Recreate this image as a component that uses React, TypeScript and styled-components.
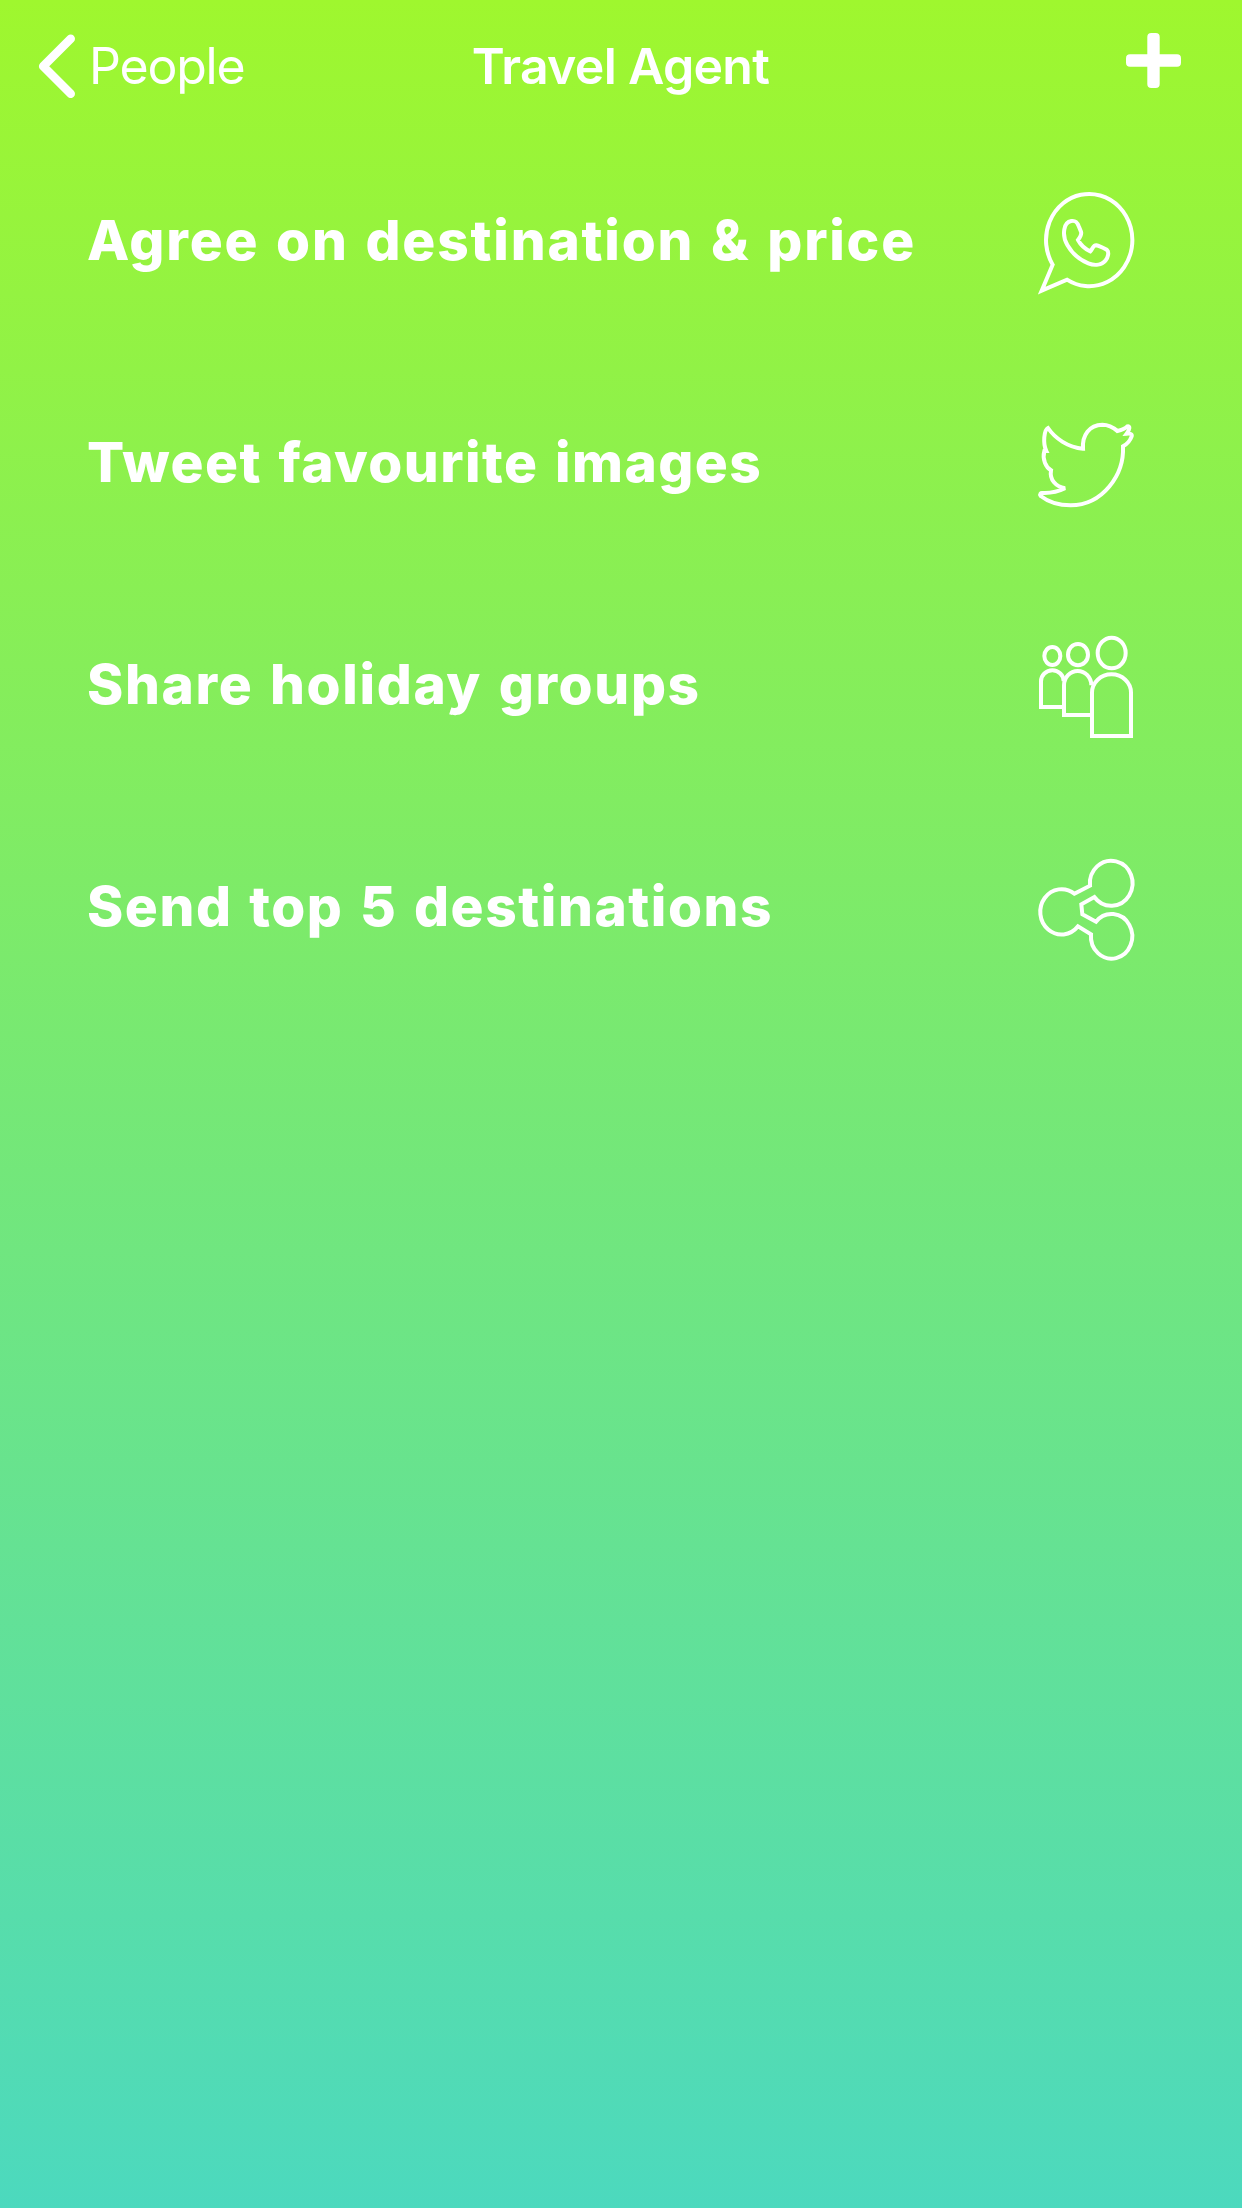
import React from "react";
import styled, { createGlobalStyle } from "styled-components";

const GlobalStyle = createGlobalStyle`
  * { box-sizing: border-box; }
  body { margin: 0; }
`;

const Screen = styled.main`
  min-height: 2208px;
  display: flex;
  flex-direction: column;
  color: #fff;
  font-family: Inter, "Liberation Sans", sans-serif;
  background: linear-gradient(180deg, #9ff72e 0%, #4cd9be 100%);
`;

const NavBar = styled.header`
  height: 132px;
  display: grid;
  grid-template-columns: 1fr auto 1fr;
  align-items: center;
  padding: 0 38px;
`;

const BackButton = styled.button`
  display: flex;
  align-items: center;
  gap: 13px;
  padding: 0;
  border: 0;
  background: none;
  color: inherit;
  font: 400 50px/60px Inter, sans-serif;
  letter-spacing: -1.2px;
`;

const Title = styled.h1`
  margin: 0;
  padding-right: 1px;
  font-size: 50px;
  line-height: 60px;
  font-weight: 600;
  letter-spacing: -0.7px;
`;

const AddButton = styled.button`
  justify-self: end;
  display: flex;
  padding: 0;
  margin: 0 23px 11px 0;
  border: 0;
  background: none;
`;

const TaskList = styled.ul`
  list-style: none;
  margin: 0;
  padding: 0;
`;

const TaskRow = styled.li`
  height: 222px;
  display: flex;
  align-items: center;
  justify-content: space-between;
  padding: 0 91px 0 87px;
`;

const TaskLabel = styled.span<{ $tracking: number }>`
  padding-bottom: 6px;
  font-size: 55px;
  line-height: 66px;
  font-weight: 800;
  white-space: nowrap;
  word-spacing: 3px;
  letter-spacing: ${(p) => p.$tracking}px;
`;

const OutlineIcon = styled.svg`
  flex: none;
  width: 130px;
  height: 130px;
  fill: none;
  stroke: #fff;
  stroke-width: 12;
  stroke-miterlimit: 8;
`;

const WhatsAppIcon = () => (
  <OutlineIcon viewBox="3 -6 390 390">
    <path d="M98 254A129.5 138.5 0 1 1 141 299L65 332Z" />
    <path d="M154 123C166 121 171 125 176 138L183 155C186 163 180 172 174 180C182 195 195 207 211 214C218 207 219 195 229 196C240 198 250 204 261 210C268 216 264 232 257 241C245 255 225 258 205 250C180 240 155 218 142 195C132 178 130 165 133 148C135 135 142 125 154 123Z" />
  </OutlineIcon>
);

const TwitterIcon = () => (
  <OutlineIcon viewBox="3 0 390 390">
    <path
      strokeMiterlimit={3}
      d="M189 146C186 105 208 75 247 74C265 74 281 83 292 93C304 90 315 86 322 79C330 77 331 86 320 101C330 100 337 102 335 109C331 120 320 133 309 139C313 225 248 315 152 316C118 316 85 306 62 288C58 282 62 278 68 279C95 280 115 275 135 265C108 260 88 240 93 211C78 202 66 178 73 153L79 153C68 130 72 90 84 84C105 115 145 143 189 146Z"
    />
  </OutlineIcon>
);

const GroupIcon = () => (
  <OutlineIcon viewBox="3 6 390 390">
    <ellipse cx="97" cy="108" rx="24" ry="27" />
    <ellipse cx="174" cy="104" rx="30" ry="32" />
    <ellipse cx="275" cy="99" rx="42" ry="46" />
    <path d="M130 261H63V184A34 33 0 0 1 131 184" />
    <path d="M213 285H132V196A41 43 0 0 1 214 196" />
    <path d="M216 348V218A58.5 55 0 0 1 333 218V348Z" />
  </OutlineIcon>
);

const ShareIcon = () => (
  <OutlineIcon viewBox="3 -3 390 390">
    <path d="M163 146L210 122A64 67.5 0 1 1 223 156L184 178L187 208L228 230A62 67 0 1 1 213 268L174 244A64 68 0 1 1 163 146Z" />
  </OutlineIcon>
);

const tasks = [
  { label: "Agree on destination & price", tracking: 1.79, Icon: WhatsAppIcon },
  { label: "Tweet favourite images", tracking: 1.45, Icon: TwitterIcon },
  { label: "Share holiday groups", tracking: 1.63, Icon: GroupIcon },
  { label: "Send top 5 destinations", tracking: 1.55, Icon: ShareIcon },
];

export default function App() {
  return (
    <Screen>
      <GlobalStyle />
      <NavBar>
        <BackButton>
          <svg width="38" height="64" viewBox="0 0 38 64" fill="none" stroke="#fff" strokeWidth="8.6" strokeLinecap="round" strokeLinejoin="round">
            <path d="M32.7 4.8L5.2 32.3L32.7 59.8" />
          </svg>
          People
        </BackButton>
        <Title>Travel Agent</Title>
        <AddButton aria-label="Add">
          <svg width="55" height="55" viewBox="0 0 55 55" fill="#fff">
            <rect x="0" y="21.3" width="55" height="12.4" rx="4" />
            <rect x="21.3" y="0" width="12.4" height="55" rx="4" />
          </svg>
        </AddButton>
      </NavBar>
      <TaskList>
        {tasks.map(({ label, tracking, Icon }) => (
          <TaskRow key={label}>
            <TaskLabel $tracking={tracking}>{label}</TaskLabel>
            <Icon />
          </TaskRow>
        ))}
      </TaskList>
    </Screen>
  );
}
